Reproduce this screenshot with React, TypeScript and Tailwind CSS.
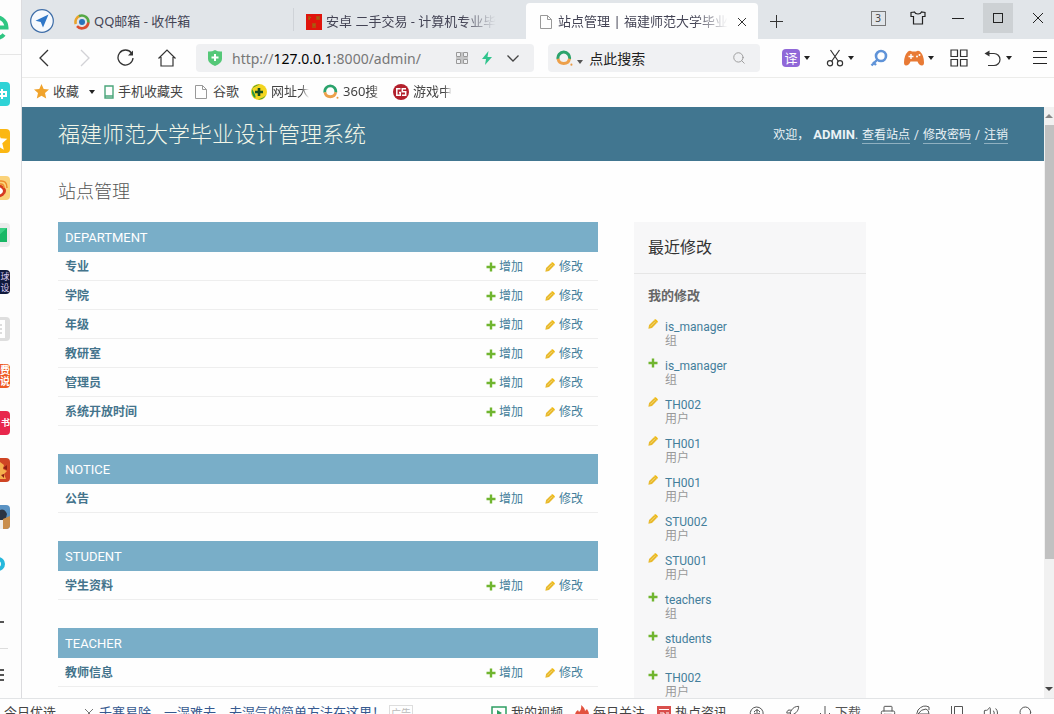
import type { ReactNode } from 'react';
import { Rocket, Volume2, Search, Printer } from 'lucide-react';

const UI = "font-['Noto_Sans','Noto_Sans_CJK_SC',sans-serif]";
const PAGE = "font-['Roboto','Noto_Sans_CJK_SC',sans-serif]";

function Caret() {
  return (
    <svg viewBox="0 0 6 4" className="h-1 w-1.5 shrink-0" fill="#222">
      <path d="M0 0h6L3 4z" />
    </svg>
  );
}

function IconButton({ label, className = 'w-5', children }: { label: string; className?: string; children: ReactNode }) {
  return (
    <button aria-label={label} className={`flex h-6 shrink-0 items-center justify-center ${className}`}>
      {children}
    </button>
  );
}

function PlusIcon() {
  return (
    <svg viewBox="0 0 10 10" className="size-2.5 shrink-0" fill="#70b52f">
      <path d="M3.8 0.5h2.4v3.3h3.3v2.4H6.2v3.3H3.8V6.2H0.5V3.8h3.3z" />
    </svg>
  );
}

function PencilIcon() {
  return (
    <svg viewBox="0 0 11 11" className="size-2.5 shrink-0">
      <path d="M0.4 10.6l0.8-4L6.800 1l3.200 3.200-5.600 5.600z" fill="#e8b92c" />
      <path d="M6.800 1l0.700-0.700q.7-.4 1.400.2l1.600 1.600q.6.7.2 1.400l-.7.7z" fill="#efb80b" />
      <path d="M2.600 8.200l5-5" stroke="#f8e08a" strokeWidth="0.8" />
    </svg>
  );
}

function FileIcon() {
  return (
    <svg viewBox="0 0 12 14" className="h-3.5 w-3 shrink-0" fill="none" stroke="#999">
      <path d="M.5.5h7l4 4v9H.5zM7.500.5v4h4" />
    </svg>
  );
}

function SoIcon({ className = 'size-4' }: { className?: string }) {
  return (
    <svg viewBox="0 0 16 16" className={`shrink-0 ${className}`} fill="none" strokeWidth="2.800">
      <path d="M1.900 8.500A5.500 5.500 0 1 1 12.700 8.500" stroke="#2ba36c" />
      <path d="M1.900 8.300A5.500 5.500 0 0 0 12.700 8.300" stroke="#eda04a" />
      <circle cx="14.500" cy="13.800" r="1" fill="#e99a45" />
    </svg>
  );
}

/* ---------- left dock ---------- */

function DockTile({ label, className, children }: { label: string; className: string; children?: ReactNode }) {
  return (
    <button aria-label={label} className="flex h-[47px] w-full items-center justify-end pr-[11px]">
      <span className={`flex size-6 shrink-0 items-center justify-end overflow-hidden rounded ${className}`}>{children}</span>
    </button>
  );
}

function Dock() {
  return (
    <aside className="flex w-[22px] shrink-0 flex-col overflow-hidden border-r border-[#dcdcdf] bg-[#fdfdfd]">
      <div className="flex h-[55px] shrink-0 items-center justify-end border-b border-[#e6e6e6] pr-3">
        <svg viewBox="0 0 26 26" className="size-[26px] shrink-0" fill="none" stroke="#2fc682" strokeWidth="4">
          <path d="M3 13.500h20.500A10.500 10.500 0 1 0 21 20.500" />
        </svg>
      </div>
      <nav className="flex flex-col pt-[15px]">
        <DockTile label="助手" className="bg-[#2fd3d6]">
          <svg viewBox="0 0 24 24" className="size-6" fill="none" stroke="#fff" strokeWidth="2">
            <path d="M16 7v10M13 10h7v4h-7" />
          </svg>
        </DockTile>
        <DockTile label="收藏" className="bg-[#fbb713]">
          <svg viewBox="0 0 24 24" className="size-6" fill="#fff">
            <path d="M12 3l2.700 6.200 6.600.6-5 4.400 1.500 6.600L12 17.300l-5.800 3.500 1.500-6.600-5-4.400 6.600-.6z" />
          </svg>
        </DockTile>
        <DockTile label="微博" className="bg-[#fad27a]">
          <svg viewBox="0 0 24 24" className="size-6" fill="none">
            <ellipse cx="11" cy="15" rx="9" ry="6.500" fill="#d63a22" />
            <ellipse cx="11" cy="15" rx="6" ry="4" fill="#fff" />
            <circle cx="11" cy="15" r="2.500" fill="#222" />
            <path d="M14 5q7-1 7 7M14 8q4-.5 4 4" stroke="#ee8a2a" strokeWidth="1.500" />
          </svg>
        </DockTile>
        <DockTile label="邮件" className="bg-[#ececec]">
          <svg viewBox="0 0 24 24" className="size-6">
            <path d="M0 5h21v14H0z" fill="#17b765" />
            <path d="M0 5h21l-10 9z" fill="#38cf82" />
          </svg>
        </DockTile>
        <DockTile label="球设" className="bg-[#101a3c]">
          <span className="w-2.5 text-[9px] leading-[11px] text-[#d8c9ef]">球设</span>
        </DockTile>
        <DockTile label="文档" className="bg-[#dedede]">
          <svg viewBox="0 0 24 24" className="size-6">
            <path d="M3 3h16v18H3z" fill="#fff" />
            <path d="M6 8h10M6 12h10M6 16h10" stroke="#bbb" />
          </svg>
        </DockTile>
        <DockTile label="小说" className="bg-[#ee5a24]">
          <span className="w-2.5 text-[10px] font-bold leading-[11px] text-white">费说</span>
        </DockTile>
        <DockTile label="看书" className="bg-[#e8274c]">
          <span className="w-[9px] text-[9px] font-bold leading-[11px] text-white">书</span>
        </DockTile>
        <DockTile label="游戏一" className="bg-[#cf4524]">
          <svg viewBox="0 0 24 24" className="size-6">
            <path d="M14 4l4 3-1 4 4 2-3 3 2 5h-6z" fill="#f5b04d" />
            <path d="M17 10l4-3v5zM15 17l3-1v4z" fill="#8d1f14" />
          </svg>
        </DockTile>
        <DockTile label="游戏二" className="bg-[#5a93c4]">
          <svg viewBox="0 0 24 24" className="size-6">
            <path d="M12 6q6-4 9 3l-2 8-7 2z" fill="#2c3442" />
            <path d="M17 14l7-3v13h-9z" fill="#c98d4a" />
            <path d="M14 15h3v9h-3z" fill="#f0ede8" />
          </svg>
        </DockTile>
        <button aria-label="应用" className="flex h-[47px] w-full items-center justify-end pr-4">
          <span className="size-3.5 shrink-0 rounded-full border-4 border-[#26b8dc]" />
        </button>
      </nav>
      <div className="mt-auto flex shrink-0 flex-col pb-[17px]">
        <span className="mb-[25px] h-0.5 w-1 bg-[#555]" />
        <span className="mb-[20px] h-px w-2 bg-[#ddd]" />
        <span className="flex w-1 flex-col gap-[3px]">
          <i className="h-0.5 bg-[#555]" />
          <i className="h-0.5 bg-[#555]" />
          <i className="h-0.5 bg-[#555]" />
        </span>
      </div>
    </aside>
  );
}

/* ---------- browser chrome ---------- */

const FADE = '[mask-image:linear-gradient(to_right,#000_80%,transparent)]';

function TabStrip() {
  return (
    <div className="flex h-[39px] shrink-0 bg-[#e1e5e9] text-[13px] text-[#445]">
      <div className="flex w-11 shrink-0 items-center pl-2 pt-[3px]">
        <IconButton label="导航" className="w-6">
          <svg viewBox="0 0 24 24" className="size-6">
            <circle cx="12" cy="12" r="11.300" fill="#f6f9fd" stroke="#3f6ea8" strokeWidth="1.200" />
            <path d="M18.500 5.500L5.500 11.800l5.200 1.300 2.300 5.400z" fill="#2f77c8" />
          </svg>
        </IconButton>
      </div>
      <div className="my-2 flex w-[228px] min-w-0 items-center gap-1 border-r border-[#cfd3d8] pl-2 pt-1">
        <svg viewBox="0 0 16 16" className="size-4 shrink-0" fill="none" strokeWidth="2.600">
          <path d="M1.800 10A6.500 6.500 0 0 1 6 1.800" stroke="#e9a32b" />
          <path d="M5 2.200A6.500 6.500 0 0 1 14.300 9" stroke="#55a845" />
          <path d="M14.300 8.500A6.500 6.500 0 0 1 3 12.200" stroke="#dc4d2f" />
          <circle cx="8" cy="8" r="3" fill="#2a72bb" />
        </svg>
        <span className="truncate">QQ邮箱 - 收件箱</span>
      </div>
      <div className="my-2 flex w-[232px] min-w-0 items-center gap-1 pl-3 pr-7 pt-1">
        <svg viewBox="0 0 16 16" className="size-4 shrink-0">
          <path d="M0 0h16v16H0z" fill="#e0140c" />
          <path d="M3 2v4M5 3l-2 2M11 2v4M13 2v4M11 4h2M7 9v5M9 9v5M7 11h2" stroke="#8f7a10" />
        </svg>
        <span className={`overflow-hidden whitespace-nowrap ${FADE}`}>安卓 二手交易 - 计算机专业毕</span>
      </div>
      <div className="mt-[3px] flex w-[232px] min-w-0 items-center gap-1.5 rounded-t bg-[#fefefe] pl-3.5 pr-2 pt-0.5">
        <FileIcon />
        <span className={`min-w-0 flex-1 overflow-hidden whitespace-nowrap ${FADE}`}>站点管理 | 福建师范大学毕业</span>
        <IconButton label="关闭标签" className="w-4">
          <svg viewBox="0 0 10 10" className="size-2.5" stroke="#333">
            <path d="M1 1l8 8M9 1L1 9" />
          </svg>
        </IconButton>
      </div>
      <div className="flex items-center pl-2 pt-1">
        <IconButton label="新建标签">
          <svg viewBox="0 0 13 13" className="size-[13px]" stroke="#333">
            <path d="M6.500 0v13M0 6.500h13" />
          </svg>
        </IconButton>
      </div>
      <div className="ml-auto flex gap-2.5 pr-px pt-[3px]">
        <button className="flex h-[30px] w-[30px] items-center justify-center">
          <span className="size-[15px] border border-[#777] text-center text-[10px] leading-[13px] text-[#444]">3</span>
        </button>
        <IconButton label="皮肤" className="h-[30px] w-[30px]">
          <svg viewBox="0 0 16 14" className="h-3.5 w-4" fill="none" stroke="#222" strokeWidth="1.200">
            <path d="M4.500 1L1 1.500v4h2.500V13h9V5.500H15v-4L11.500 1Q10.800 3 8 3T4.500 1z" />
          </svg>
        </IconButton>
        <IconButton label="最小化" className="h-[30px] w-[30px]">
          <span className="h-px w-3 bg-[#222]" />
        </IconButton>
        <button aria-label="最大化" className="flex h-[30px] w-[30px] items-center justify-center bg-[#cdd1d4]">
          <span className="size-2.5 border border-[#222]" />
        </button>
        <IconButton label="关闭" className="h-[30px] w-[30px]">
          <svg viewBox="0 0 12 12" className="size-3" stroke="#222">
            <path d="M1 1l10 10M11 1L1 11" />
          </svg>
        </IconButton>
      </div>
    </div>
  );
}

function Toolbar() {
  return (
    <div className="flex h-[39px] shrink-0 items-center border-b border-[#ececea] bg-[#fefefe] pl-3 pr-1.5">
      <div className="flex shrink-0 gap-[21px] pr-[19px]">
        <IconButton label="后退">
          <svg viewBox="0 0 10 18" className="h-[18px] w-2.5" fill="none" stroke="#333" strokeWidth="1.300">
            <path d="M9 1L1 9l8 8" />
          </svg>
        </IconButton>
        <IconButton label="前进">
          <svg viewBox="0 0 10 18" className="h-[18px] w-2.5" fill="none" stroke="#d2d2d6" strokeWidth="1.300">
            <path d="M1 1l8 8-8 8" />
          </svg>
        </IconButton>
        <IconButton label="刷新">
          <svg viewBox="0 0 18 18" className="size-[18px]" fill="none" stroke="#333" strokeWidth="1.300">
            <path d="M14.500 4A7.500 7.500 0 1 0 16 9" />
            <path d="M16 1.500v5h-5z" fill="#333" stroke="none" />
          </svg>
        </IconButton>
        <IconButton label="主页">
          <svg viewBox="0 0 18 18" className="size-[18px]" fill="none" stroke="#333" strokeWidth="1.200">
            <path d="M.5 9.500L9 1l8.500 8.500M3 8v9h12V8" />
          </svg>
        </IconButton>
      </div>
      <div className="flex h-7 min-w-0 flex-[342] items-center rounded bg-[#eff0f2] pl-3 pr-3.5">
        <svg viewBox="0 0 14 16" className="h-4 w-3.5 shrink-0">
          <path d="M0 1.500Q4 1.800 7 0q3 1.800 7 1.500V9q0 4-7 7-7-3-7-7z" fill="#55c878" />
          <path d="M7 4v7M3.500 7.500h7" stroke="#fff" strokeWidth="2" />
        </svg>
        <a href="http://127.0.0.1:8000/admin/" className="ml-2.5 min-w-0 flex-1 truncate text-[14px] text-[#777]">
          http://<span className="text-black">127.0.0.1</span>:8000/admin/
        </a>
        <div className="flex items-center gap-3.5">
          <svg viewBox="0 0 12 12" className="size-3" fill="none" stroke="#999">
            <path d="M.5.5h4v4h-4zM7.500.5h4v4h-4zM.5 7.500h4v4h-4zM7.500 7.500h4v4h-4zM6 0v5M0 6h12M6 7v5" />
          </svg>
          <svg viewBox="0 0 10 14" className="h-3.5 w-2.5" fill="#2fc48d">
            <path d="M6.500 0L0 8h4l-1 6 7-8H5.500z" />
          </svg>
          <IconButton label="展开" className="w-3.5">
            <svg viewBox="0 0 12 7" className="h-[7px] w-3" fill="none" stroke="#444" strokeWidth="1.300">
              <path d="M.5.5L6 6l5.500-5.500" />
            </svg>
          </IconButton>
        </div>
      </div>
      <div className="ml-3.5 flex h-7 min-w-0 flex-[208] items-center rounded bg-[#f0f1f3] pl-2 pr-3.5">
        <SoIcon className="size-[17px]" />
        <span className="ml-1 mt-2 flex">
          <svg viewBox="0 0 6 4" className="h-1 w-1.5" fill="#555">
            <path d="M0 0h6L3 4z" />
          </svg>
        </span>
        <input
          aria-label="搜索"
          placeholder="点此搜索"
          className="ml-1.5 min-w-0 flex-1 bg-transparent text-[14px] outline-none placeholder:text-[#222]"
        />
        <Search className="size-3.5 text-[#999]" strokeWidth={1.6} />
      </div>
      <div className="ml-[22px] flex shrink-0 items-center gap-4">
        <button className="flex items-center gap-1">
          <span className="flex size-[18px] items-center justify-center rounded-sm bg-[#9068d8] text-[13px] leading-[18px] text-white">译</span>
          <Caret />
        </button>
        <button aria-label="截图" className="flex items-center gap-1">
          <svg viewBox="0 0 18 18" className="size-[18px]" fill="none" stroke="#333" strokeWidth="1.200">
            <path d="M4.500 1l8 11.500M13.500 1l-8 11.500" />
            <circle cx="4" cy="14.300" r="2.600" />
            <circle cx="14" cy="14.300" r="2.600" />
          </svg>
          <Caret />
        </button>
        <button aria-label="查找">
          <svg viewBox="0 0 18 18" className="size-[18px]" fill="none" stroke="#5f93d8">
            <circle cx="11" cy="7" r="5" strokeWidth="2.600" />
            <path d="M7.500 10.500L1.500 16.500M3 13l3 3" strokeWidth="2.400" />
          </svg>
        </button>
        <button aria-label="游戏" className="flex items-center gap-1">
          <svg viewBox="0 0 20 16" className="h-4 w-5">
            <path d="M4 1.500q2-1.500 4 0h4q2-1.500 4 0 4 4 4 11 0 3-2 3-3 0-4.500-4h-7q-1.500 4-4.500 4-2 0-2-3 0-7 4-11z" fill="#e87a35" />
            <path d="M7 4v5M4.500 6.500h5" stroke="#fff" strokeWidth="1.400" />
            <circle cx="13" cy="6.500" r="1" fill="#fff" />
            <circle cx="15.500" cy="5" r="1" fill="#fff" />
          </svg>
          <Caret />
        </button>
        <button aria-label="扩展">
          <svg viewBox="0 0 18 18" className="size-[18px]" fill="none" stroke="#333" strokeWidth="1.200">
            <path d="M1 1h6.500v6.500H1zM10.500 1H17v6.500h-6.500zM1 10.500h6.500V17H1zM10.500 10.500H17V17h-6.500z" />
          </svg>
        </button>
        <button aria-label="撤销" className="flex items-center gap-1">
          <svg viewBox="0 0 18 18" className="size-[18px]" fill="none" stroke="#333" strokeWidth="1.200">
            <path d="M3 4.500h7a6 6 0 0 1 0 12H4" />
            <path d="M.5 4.500L5.500 1.500v6z" fill="#333" stroke="none" />
          </svg>
          <Caret />
        </button>
      </div>
      <button aria-label="菜单" className="ml-5 shrink-0">
        <svg viewBox="0 0 16 14" className="h-3.5 w-4" stroke="#222">
          <path d="M1 .5h14M1 6.500h14M1 12.500h14" />
        </svg>
      </button>
    </div>
  );
}

function Bookmarks() {
  return (
    <div className="flex h-[29px] shrink-0 items-center bg-[#fefefe] pb-0.5 pl-3 text-[13px] text-[#444]">
      <a href="#fav" className="flex items-center gap-1">
        <svg viewBox="0 0 15 15" className="size-[15px]" fill="#f0a32c">
          <path d="M7.500 0l2.200 5 5.300.5-4 3.600 1.200 5.400-4.700-2.800-4.700 2.800L4 9.100 0 5.500 5.300 5z" />
        </svg>
        收藏
      </a>
      <span className="ml-2.5 mr-[9px] flex">
        <Caret />
      </span>
      <a href="#mobile" className="flex items-center gap-1">
        <svg viewBox="0 0 10 14" className="h-3.5 w-2.5" fill="none" stroke="#4aa57a" strokeWidth="1.400">
          <path d="M1 1h8v12H1zM1 11h8" />
        </svg>
        手机收藏夹
      </a>
      <a href="#google" className="ml-3 flex items-center gap-1.5">
        <FileIcon />
        谷歌
      </a>
      <a href="#sites" className="ml-3 flex items-center gap-1">
        <svg viewBox="0 0 16 16" className="size-4" fill="none">
          <circle cx="8" cy="8" r="8" fill="#f3d51f" />
          <path d="M1 5Q4 0 9 .5q-6 2-8 4.500zM15 11q-3 5-8 4.500 6-2 8-4.500zM1 5q-1 6 3 9 2-1-3-9z" fill="#2c9a3f" />
          <path d="M8 4v8M4 8h8" stroke="#174f20" strokeWidth="2.600" />
        </svg>
        <span className={`w-[38px] overflow-hidden whitespace-nowrap ${FADE}`}>网址大</span>
      </a>
      <a href="#so" className="ml-3.5 flex items-center gap-1">
        <SoIcon />
        <span className={`w-[38px] overflow-hidden whitespace-nowrap ${FADE}`}>360搜</span>
      </a>
      <a href="#games" className="ml-3 flex items-center gap-1">
        <svg viewBox="0 0 16 16" className="size-4" fill="none" stroke="#fff" strokeWidth="1.500">
          <circle cx="8" cy="8" r="8" fill="#b3202c" stroke="none" />
          <path d="M7.500 4.800H3.800v6.400h3.500V8.500H6M13 4.800H9.300v3h3.400v3.400H9" />
        </svg>
        <span className={`w-[39px] overflow-hidden whitespace-nowrap ${FADE}`}>游戏中</span>
      </a>
    </div>
  );
}

/* ---------- admin page ---------- */

const APPS = [
  { name: 'DEPARTMENT', models: ['专业', '学院', '年级', '教研室', '管理员', '系统开放时间'] },
  { name: 'NOTICE', models: ['公告'] },
  { name: 'STUDENT', models: ['学生资料'] },
  { name: 'TEACHER', models: ['教师信息'] },
];

const ACTIONS = [
  { kind: 'edit', name: 'is_manager', type: '组' },
  { kind: 'add', name: 'is_manager', type: '组' },
  { kind: 'edit', name: 'TH002', type: '用户' },
  { kind: 'edit', name: 'TH001', type: '用户' },
  { kind: 'edit', name: 'TH001', type: '用户' },
  { kind: 'edit', name: 'STU002', type: '用户' },
  { kind: 'edit', name: 'STU001', type: '用户' },
  { kind: 'add', name: 'teachers', type: '组' },
  { kind: 'add', name: 'students', type: '组' },
  { kind: 'add', name: 'TH002', type: '用户' },
];

function AppTable({ name, models }: { name: string; models: string[] }) {
  const cell = 'border-b border-[#eee] pt-0.5';
  return (
    <table className="w-full border-separate border-spacing-0 text-[12px] leading-4 text-[#447e9b]">
      <caption className="h-[30px] bg-[#79aec8] px-[7px] text-left text-[13px] font-normal leading-[31px] text-white">
        <a href="#app">{name}</a>
      </caption>
      <tbody>
        {models.map((m) => (
          <tr key={m} className="h-[29px]">
            <th scope="row" className={`px-[7px] text-left font-bold text-[#44748c] ${cell}`}>
              <a href="#model">{m}</a>
            </th>
            <td className={`w-[60px] pl-2 ${cell}`}>
              <a href="#add" className="flex items-center gap-[3px]">
                <PlusIcon />
                增加
              </a>
            </td>
            <td className={`w-[60px] pl-[7px] ${cell}`}>
              <a href="#change" className="flex items-center gap-1">
                <PencilIcon />
                修改
              </a>
            </td>
          </tr>
        ))}
      </tbody>
    </table>
  );
}

function AdminPage() {
  const tool = 'border-b border-[#8fb0c0]';
  return (
    <div className={`min-w-0 flex-1 overflow-hidden bg-[#fefefe] ${PAGE}`}>
      <header className="flex h-[54px] items-center justify-between bg-[#417690] px-9 pt-0.5 text-white">
        <h1 className="text-[22px] font-light leading-7 text-[#f2f6e8]">福建师范大学毕业设计管理系统</h1>
        <div className="flex items-center text-[12px] leading-4 text-[#eaf2f5]">
          <span className="mr-1">欢迎，</span>
          <strong className="text-[13px]">ADMIN</strong>
          <span className="mr-1">.</span>
          <a href="#site" className={tool}>查看站点</a>
          <span className="px-1">/</span>
          <a href="#password" className={tool}>修改密码</a>
          <span className="px-1">/</span>
          <a href="#logout" className={tool}>注销</a>
        </div>
      </header>
      <main className="px-9 pt-[19px]">
        <h2 className="text-[18px] font-light leading-6 text-[#555]">站点管理</h2>
        <div className="mt-[18px] flex items-start gap-9">
          <div className="flex max-w-[540px] flex-1 flex-col gap-7">
            {APPS.map((a) => (
              <AppTable key={a.name} name={a.name} models={a.models} />
            ))}
          </div>
          <aside className="w-[232px] shrink-0 bg-[#f7f7f8] pb-8">
            <h2 className="border-b border-[#e6e6e6] py-[13px] pl-3.5 text-[16px] leading-[25px] text-[#333]">最近修改</h2>
            <h3 className="pl-3.5 pt-3.5 text-[13px] font-bold leading-4 text-[#666]">我的修改</h3>
            <ul className="flex flex-col gap-[11px] pl-3.5 pt-[15px]">
              {ACTIONS.map((a, i) => (
                <li key={i} className="flex items-start gap-[7px] leading-[14px]">
                  {a.kind === 'add' ? <PlusIcon /> : <PencilIcon />}
                  <div className="pt-px">
                    <a href="#object" className="block h-3.5 text-[12px] text-[#447e9b]">{a.name}</a>
                    <span className="block h-[13px] text-[12px] text-[#999]">{a.type}</span>
                  </div>
                </li>
              ))}
            </ul>
          </aside>
        </div>
      </main>
    </div>
  );
}

function ScrollTrack() {
  return (
    <div className="flex w-2.5 shrink-0 flex-col items-center overflow-hidden bg-[#f1f1f1]">
      <svg viewBox="0 0 8 4" className="my-[7px] h-1 w-2" fill="#888">
        <path d="M0 4h8L4 0z" />
      </svg>
      <div className="ml-0.5 w-full flex-[431] bg-[#c1c1c1]" />
      <div className="flex-[127]" />
      <svg viewBox="0 0 8 4" className="mb-[7px] h-1 w-2" fill="#444">
        <path d="M0 0h8L4 4z" />
      </svg>
    </div>
  );
}

/* ---------- status bar ---------- */

function StatusBar() {
  return (
    <footer className="h-4 shrink-0 overflow-hidden border-t border-[#e2e4e6] bg-[#fefefe] text-[13px] text-[#444]">
      <div className="flex h-[27px] items-center pl-1 pr-5">
        <span className="whitespace-nowrap">今日优选</span>
        <svg viewBox="0 0 8 8" className="ml-[29px] size-2" stroke="#777">
          <path d="M0 0l8 8M8 0L0 8" />
        </svg>
        <a href="#news" className="ml-1.5 whitespace-nowrap text-[#35598f]">千寒易除，一湿难去，去湿气的简单方法在这里！</a>
        <span className="ml-1 border border-[#ddd] px-px text-[10px] leading-[14px] text-[#bbb]">广告</span>
        <div className="ml-auto flex shrink-0 items-center gap-3">
          <a href="#video" className="flex items-center gap-1">
            <svg viewBox="0 0 16 14" className="h-3.5 w-4">
              <path d="M1 1h14v12H1z" fill="none" stroke="#2f9e63" strokeWidth="1.500" />
              <path d="M6 4l5 3-5 3z" fill="#2f9e63" />
            </svg>
            我的视频
          </a>
          <a href="#daily" className="flex items-center gap-1">
            <svg viewBox="0 0 14 16" className="h-4 w-3.5" fill="#e2523e">
              <path d="M6 0q4 3 4 6l2-2q2 3 2 6 0 6-7 6t-7-6q0-3 3-5l1 2q3-3 2-7z" />
            </svg>
            每日关注
          </a>
          <a href="#hot" className="flex items-center gap-1">
            <svg viewBox="0 0 14 14" className="size-3.5">
              <path d="M0 0h14v14H0z" fill="#d94f4c" />
              <path d="M2 3.500h10M3 7h4v4H3M9 7h3M9 10h3" stroke="#fff" fill="none" />
            </svg>
            热点资讯
          </a>
        </div>
        <div className="ml-[22px] flex shrink-0 items-center gap-[19px] text-[#555]">
          <svg viewBox="0 0 16 16" className="size-4" fill="none" stroke="currentColor">
            <path d="M3 13a6.500 6.500 0 1 1 5 2M8 4v9M5 7q3-4 6 0M5 8q3 3 6 0" />
          </svg>
          <Rocket className="size-4" strokeWidth={1.5} />
          <a href="#download" className="flex items-center gap-1">
            <svg viewBox="0 0 12 14" className="h-3.5 w-3" fill="none" stroke="currentColor">
              <path d="M6 0v12M1 7l5 5 5-5" />
            </svg>
            下载
          </a>
          <Printer className="size-4" strokeWidth={1.5} />
          <svg viewBox="0 0 16 16" className="size-4" fill="none" stroke="currentColor">
            <path d="M14 2Q8-1 3 5q-4 8 5 10 5 0 6-4M3 9h11q0-4-3-5-5 0-8 5M14 2v3" />
          </svg>
          <svg viewBox="0 0 14 16" className="h-4 w-3.5" fill="none" stroke="currentColor">
            <path d="M4.500 1.500h8v13h-8zM1.500 1v13" />
          </svg>
          <Volume2 className="size-4" strokeWidth={1.5} />
          <Search className="size-4" strokeWidth={1.5} />
        </div>
      </div>
    </footer>
  );
}

export default function App() {
  return (
    <div className={`flex h-screen flex-col overflow-hidden bg-[#fefefe] ${UI}`}>
      <div className="flex min-h-0 flex-1">
        <Dock />
        <div className="flex min-w-0 flex-1 flex-col">
          <TabStrip />
          <Toolbar />
          <Bookmarks />
          <div className="flex min-h-0 flex-1">
            <AdminPage />
            <ScrollTrack />
          </div>
        </div>
      </div>
      <StatusBar />
    </div>
  );
}
